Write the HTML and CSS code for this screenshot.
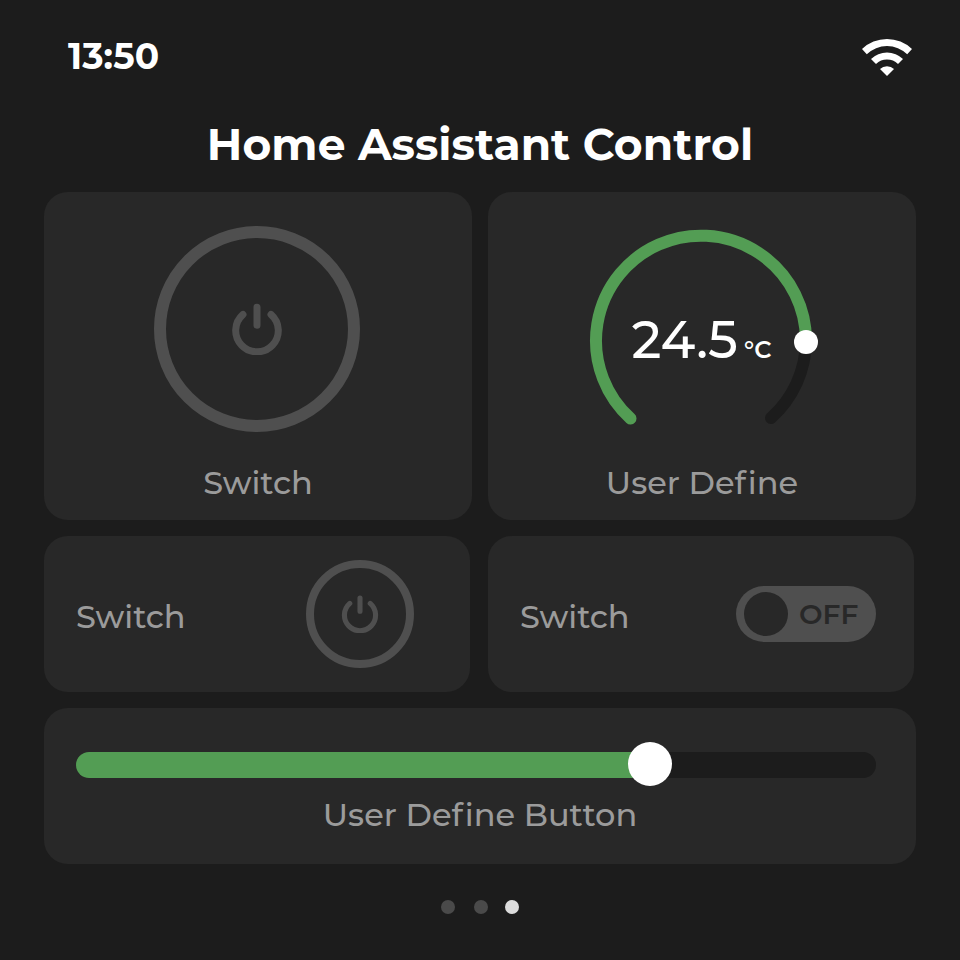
FILE: index.html
```
<!DOCTYPE html>
<html lang="en">
<head>
<meta charset="utf-8">
<title>Home Assistant Control</title>
<link rel="stylesheet" href="styles.css">
</head>
<body>
<svg class="defs" width="0" height="0" aria-hidden="true">
  <symbol id="power" viewBox="0 0 52 52">
    <path d="M26 4.2V22.2M12 11.5A21.3 21.3 0 1 0 40 11.5" fill="none" stroke="currentColor" stroke-width="7" stroke-linecap="round"/>
  </symbol>
</svg>
<main class="screen">
  <header class="status">
    <span class="time">13:50</span>
    <svg class="wifi" viewBox="0 0 50 38" fill="#fff">
      <path d="M0 11A36 36 0 0 1 50 11L45.200 16.300A29 29 0 0 0 4.800 16.300Z"/>
      <path d="M9 21A23 23 0 0 1 41 21L36 26A16 16 0 0 0 14 26Z"/>
      <path d="M18 31A10 10 0 0 1 32 31L25 38Z"/>
    </svg>
  </header>
  <h1 class="title">Home Assistant Control</h1>
  <div class="cards">
    <section class="card tall">
      <div class="ring ring-large"><svg class="power"><use href="#power"/></svg></div>
      <span class="label">Switch</span>
    </section>
    <section class="card tall">
      <div class="gauge">
        <svg class="dial" viewBox="-2 -4 230 206" fill="none" stroke-width="12" stroke-linecap="round">
          <path d="M217 111A105 105 0 0 1 182 188" stroke="#1c1c1c"/>
          <path d="M41.500 188.500A105 105 0 1 1 217 111.500" stroke="#539d54"/>
          <circle cx="217" cy="112" r="12" fill="#fff"/>
        </svg>
        <div class="reading"><span class="value">24.5</span><span class="unit">°C</span></div>
      </div>
      <span class="label">User De<span class="loose">f</span>ine</span>
    </section>
    <section class="card short">
      <span class="label">Switch</span>
      <div class="ring ring-small"><svg class="power"><use href="#power"/></svg></div>
    </section>
    <section class="card short toggle-card">
      <span class="label">Switch</span>
      <div class="toggle"><span class="knob"></span><span class="state">OFF</span></div>
    </section>
    <section class="card wide">
      <div class="track"><div class="fill"></div><div class="thumb"></div></div>
      <span class="label button-label">User De<span class="loose">f</span>ine Button</span>
    </section>
  </div>
  <nav class="dots"><i class="dot"></i><i class="dot"></i><i class="dot active"></i></nav>
</main>
</body>
</html>
```
FILE: styles.css
```
* { box-sizing: border-box; }
body {
  margin: 0;
  background: #1c1c1c;
  color: #fff;
  font-family: Montserrat, Inter, sans-serif;
  font-variant-ligatures: none;
}
.defs { display: none; }
.screen { width: 960px; height: 960px; overflow: hidden; }
.status {
  height: 112px;
  padding: 0 48px 0 68px;
  display: flex;
  align-items: center;
  justify-content: space-between;
}
.time { font-size: 36px; line-height: 44px; font-weight: 700; letter-spacing: 0.1px; white-space: nowrap; }
.wifi { width: 50px; height: 38px; margin-top: 2px; }
.title {
  margin: 0 0 15px;
  height: 65px;
  line-height: 65px;
  font-size: 44px;
  font-weight: 700;
  letter-spacing: 0.05px;
  text-align: center;
  white-space: nowrap;
}
.cards {
  margin: 0 44px;
  display: grid;
  grid-template-columns: 428px 428px;
  grid-template-rows: 328px 156px 156px;
  gap: 16px;
}
.card { background: #282828; border-radius: 24px; display: flex; }
.label {
  color: #9b9b9b;
  font-size: 32px;
  font-weight: 500;
  line-height: 40px;
  white-space: nowrap;
}
.loose { letter-spacing: 2px; }
.tall { flex-direction: column; align-items: center; justify-content: space-between; padding: 34px 0 17px; }
.ring { border: 12px solid #4f4f4f; border-radius: 50%; display: flex; align-items: center; justify-content: center; color: #4f4f4f; }
.ring-large { width: 206px; height: 206px; margin-right: 2px; }
.ring-large .power { width: 52px; height: 52px; }
.ring-small { width: 108px; height: 108px; border-width: 8px; }
.ring-small .power { width: 38px; height: 38px; }
.gauge { display: grid; place-items: center; }
.gauge > * { grid-area: 1 / 1; }
.dial { width: 230px; height: 206px; overflow: visible; }
.reading { display: flex; align-items: baseline; gap: 6px; line-height: 60px; margin-top: 31px; margin-right: 1px; }
.value { font-size: 52px; font-weight: 500; }
.unit { font-size: 24px; font-weight: 600; }
.short { width: 426px; align-items: center; justify-content: space-between; padding: 0 56px 0 32px; }
.short .label { padding-top: 6px; }
.toggle-card { padding-right: 38px; }
.toggle {
  width: 140px;
  height: 56px;
  border-radius: 28px;
  background: #4f4f4f;
  display: flex;
  align-items: center;
  padding-left: 8px;
}
.knob { width: 44px; height: 44px; border-radius: 50%; background: #282828; }
.state { margin-left: 11px; font-size: 28px; font-weight: 600; color: #282828; }
.wide { grid-column: 1 / -1; flex-direction: column; align-items: center; padding-top: 44px; }
.track { width: 800px; height: 26px; margin-right: 8px; border-radius: 13px; background: #1c1c1c; position: relative; }
.fill { width: 574px; height: 26px; border-radius: 13px 0 0 13px; background: #539d54; }
.thumb { position: absolute; left: 552px; top: -10px; width: 44px; height: 44px; border-radius: 50%; background: #fff; }
.button-label { margin-top: 17px; }
.dots { height: 14px; margin-top: 36px; padding-left: 441px; display: flex; gap: 19px; }
.dot { width: 14px; height: 14px; border-radius: 50%; background: #4a4a4a; }
.dot.active { background: #dcdcdc; margin-left: -2px; }
```
